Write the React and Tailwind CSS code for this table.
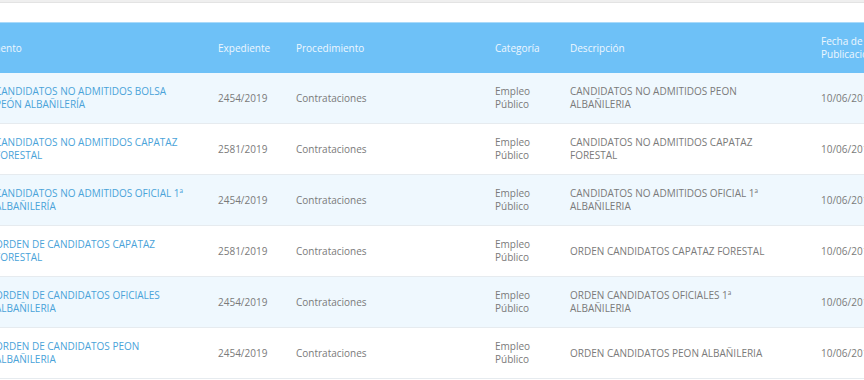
const rows = [
    { doc: ['CANDIDATOS NO ADMITIDOS BOLSA', 'PEÓN ALBAÑILERÍA'], exp: '2454/2019', desc: ['CANDIDATOS NO ADMITIDOS PEON', 'ALBAÑILERIA'] },
    { doc: ['CANDIDATOS NO ADMITIDOS CAPATAZ', 'FORESTAL'], exp: '2581/2019', desc: ['CANDIDATOS NO ADMITIDOS CAPATAZ', 'FORESTAL'] },
    { doc: ['CANDIDATOS NO ADMITIDOS OFICIAL 1ª', 'ALBAÑILERÍA'], exp: '2454/2019', desc: ['CANDIDATOS NO ADMITIDOS OFICIAL 1ª', 'ALBAÑILERIA'] },
    { doc: ['ORDEN DE CANDIDATOS CAPATAZ', 'FORESTAL'], exp: '2581/2019', desc: ['ORDEN CANDIDATOS CAPATAZ FORESTAL'] },
    { doc: ['ORDEN DE CANDIDATOS OFICIALES', 'ALBAÑILERIA'], exp: '2454/2019', desc: ['ORDEN CANDIDATOS OFICIALES 1ª', 'ALBAÑILERIA'] },
    { doc: ['ORDEN DE CANDIDATOS PEON', 'ALBAÑILERIA'], exp: '2454/2019', desc: ['ORDEN CANDIDATOS PEON ALBAÑILERIA'] },
];

const Lines = ({ lines }) => lines.map((l, i) => <span key={i} className="block">{l}</span>);

const App = () => {
    return (
        <div className="w-[864px] h-[380px] overflow-hidden bg-white text-[10px] leading-[13px] font-['Open_Sans',sans-serif]">
            <div className="h-[3px] bg-[#efefef] border-b border-[#e3e3e3]" />
            <div className="h-[19px] bg-white" />
            <div className="-ml-[40px] w-[1000px]">
                <div className="flex items-center h-[51px] bg-[#6ec1f7] border-t border-[#a9dafa] text-[#eef7fe]">
                    <div className="w-[258px] pl-[7px]">Documento</div>
                    <div className="w-[78px]">Expediente</div>
                    <div className="w-[199px]">Procedimiento</div>
                    <div className="w-[75px]">Categoría</div>
                    <div className="w-[251px]">Descripción</div>
                    <div className="flex-1"><Lines lines={['Fecha de', 'Publicación']} /></div>
                </div>
                {rows.map((r, i) => (
                    <div
                        key={i}
                        className={`flex items-center h-[51px] border-b border-[#e6ebef] text-[#7a7a7a] ${i % 2 === 0 ? 'bg-[#eff8fe]' : 'bg-white'}`}
                    >
                        <div className="w-[258px] pl-[35px]">
                            <a href="#" className="text-[#4aa3d9]"><Lines lines={r.doc} /></a>
                        </div>
                        <div className="w-[78px]">{r.exp}</div>
                        <div className="w-[199px]">Contrataciones</div>
                        <div className="w-[75px]"><Lines lines={['Empleo', 'Público']} /></div>
                        <div className="w-[251px]"><Lines lines={r.desc} /></div>
                        <div className="flex-1">10/06/2019</div>
                    </div>
                ))}
            </div>
        </div>
    );
};

export default App;
